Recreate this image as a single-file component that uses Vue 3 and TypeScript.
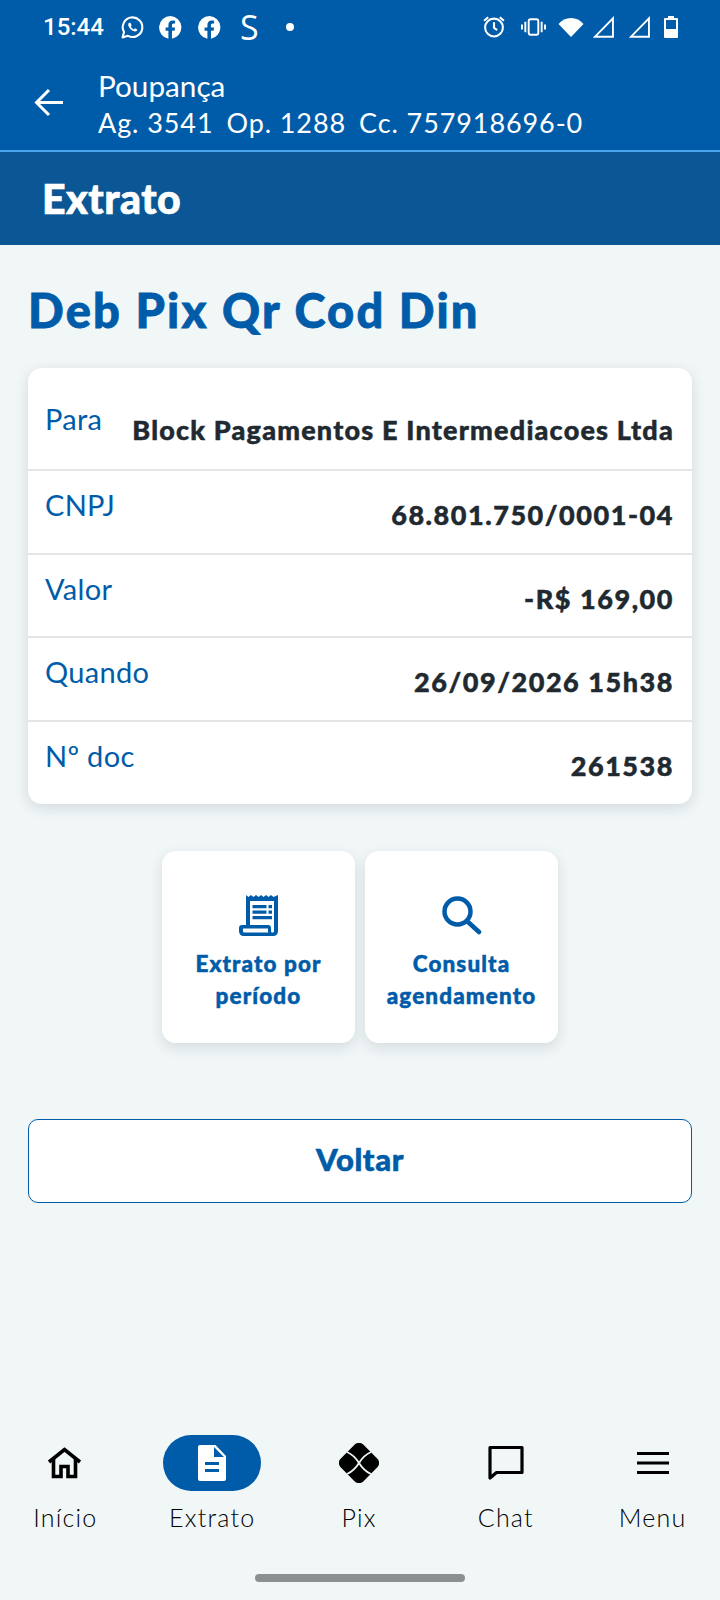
<script setup lang="ts">
const rows = [
  { label: "Para", value: "Block Pagamentos E Intermediacoes Ltda", num: false },
  { label: "CNPJ", value: "68.801.750/0001-04", num: true },
  { label: "Valor", value: "-R$ 169,00", num: true },
  { label: "Quando", value: "26/09/2026 15h38", num: true },
  { label: "Nº doc", value: "261538", num: true },
];
</script>

<template>
  <div class="page">
    <header class="top">
      <div class="status">
        <div class="status-left">
          <span class="clock">15:44</span>
          <svg class="wa" viewBox="0 0 24 24" width="25" height="25" fill="none" stroke="#fff" stroke-width="2">
            <path d="M2.500 21.500l1.400-5.100A9.400 9.400 0 1 1 7.600 20z" stroke-linejoin="round" />
            <path d="M8.600 7.400c-1 1-1 2.600.3 4.600 1.400 2 3.400 3.600 5.400 3.800 1.300.1 2.200-.8 2.300-1.900l-2.200-1.100-1 1.100c-1.200-.5-2.400-1.600-3-2.800l.8-1-1-2.500z" fill="#fff" stroke="none" />
          </svg>
          <svg class="fb" viewBox="1 1 22 22" width="23" height="23"><path fill="#fff" d="M12 1a11 11 0 0 0-2 21.800v-7.700H7.300V12H10V9.600c0-2.700 1.600-4.200 4-4.200 1.200 0 2.400.2 2.400.2v2.600h-1.300c-1.300 0-1.700.8-1.700 1.600V12h3l-.5 3.100h-2.500v7.700A11 11 0 0 0 12 1z" /></svg>
          <svg class="fb" viewBox="1 1 22 22" width="23" height="23"><path fill="#fff" d="M12 1a11 11 0 0 0-2 21.800v-7.700H7.300V12H10V9.600c0-2.700 1.600-4.200 4-4.200 1.200 0 2.400.2 2.400.2v2.600h-1.300c-1.300 0-1.700.8-1.700 1.600V12h3l-.5 3.100h-2.500v7.700A11 11 0 0 0 12 1z" /></svg>
          <span class="s-mark">S</span>
          <span class="dot"></span>
        </div>
        <div class="status-right">
          <svg class="i-alarm" viewBox="1.500 2 21 21" width="22" height="22" fill="none" stroke="#fff" stroke-width="2"><circle cx="12" cy="13" r="8.500" /><path d="M12 8v5.200l3 2.300M2.500 6.500l4-3.300M21.500 6.500l-4-3.300" /></svg>
          <svg class="i-vib" viewBox="0 3 26 18" width="25" height="18" fill="none" stroke="#fff" stroke-width="2"><rect x="8" y="4" width="10" height="16" rx="2" /><path d="M4.500 6.500v11M21.500 6.500v11M1 9.500v5M25 9.500v5" /></svg>
          <svg class="i-wifi" viewBox="0 2 26 20" width="26" height="21"><path fill="#fff" d="M13 21.500L.5 8.500C3.700 4.800 8 2.500 13 2.500s9.300 2.300 12.500 6z" /></svg>
          <svg class="i-sig1" viewBox="1.500 1.500 20 20.500" width="21" height="22"><path fill="none" stroke="#fff" stroke-width="1.800" d="M20.500 3.500v17.500H3.500z" /></svg>
          <svg class="i-sig2" viewBox="1.500 1.500 20 20.500" width="21" height="22"><path fill="none" stroke="#fff" stroke-width="1.800" d="M20.500 3.500v17.500H3.500z" /></svg>
          <svg class="i-batt" viewBox="0 1 14 23" width="14" height="23"><path fill="#fff" fill-rule="evenodd" d="M4 1h6v2h3a1 1 0 0 1 1 1v18a1 1 0 0 1-1 1H1a1 1 0 0 1-1-1V4a1 1 0 0 1 1-1h3zM2 5v9h10V5z" /></svg>
        </div>
      </div>
      <div class="appbar">
        <svg class="back" viewBox="0 0 30 30" width="30" height="30" fill="none" stroke="#fff" stroke-width="3"><path d="M29 15.500H3M15 3L2.500 15.500 15 28" /></svg>
        <div class="account">
          <div class="acc-name">Poupança</div>
          <div class="acc-num">
            <span>Ag. 3541</span>
            <span>Op. 1288</span>
            <span>Cc. 757918696-0</span>
          </div>
        </div>
      </div>
    </header>
    <div class="band">Extrato</div>

    <main class="content">
      <h1 class="title">Deb Pix Qr Cod Din</h1>
      <section class="card">
        <div v-for="r in rows" :key="r.label" class="row">
          <span class="label">{{ r.label }}</span>
          <span class="value" :class="{ num: r.num }">{{ r.value }}</span>
        </div>
      </section>

      <div class="actions">
        <button class="action">
          <svg viewBox="0 0 40 42" width="40" height="42">
            <path fill="#005ca9" fill-rule="evenodd" d="M7 0l2.500 2L12 0l2.500 2L17 0l2.500 2L22 0l2.500 2L27 0l2.500 2L32 0l2.500 2L39 0v36c0 3-2 5-5 5H5c-3 0-5-2-5-5v-3c0-2 1-3 3-3h4zM11 6v24h18c2 0 3 1 3 3v3c0 1 .5 1.500 1.500 1.500S35 37 35 36V6zM4 33.500V36c0 1 .5 1.500 1.500 1.500h23.800c-.3-.5-.3-1-.3-1.500v-2.500z" />
            <path fill="#005ca9" d="M13.500 10h14v3.200h-14zM29.500 10h3.500v3.200h-3.500zM13.500 15.500h14v3.200h-14zM29.500 15.500h3.500v3.200h-3.500zM13.500 21h19.500v3.200H13.500z" />
          </svg>
          <span>Extrato por<br />período</span>
        </button>
        <button class="action">
          <svg viewBox="0 0 40 42" width="40" height="42" fill="none" stroke="#005ca9" stroke-width="4.500">
            <circle cx="15.500" cy="16.500" r="13" />
            <path d="M25 26l12 11" stroke-linecap="round" />
          </svg>
          <span>Consulta<br />agendamento</span>
        </button>
      </div>

      <button class="voltar">Voltar</button>
    </main>

    <nav class="nav">
      <div class="nav-item">
        <div class="nav-icon">
          <svg viewBox="0 0 36 32" width="36" height="32" fill="none" stroke="#000" stroke-width="3.600"><path d="M2 15L17.500 2.500 33 15" /><path d="M6.500 12v17.500h7.500v-10h7v10h7.500V12" /></svg>
        </div>
        <span>Início</span>
      </div>
      <div class="nav-item">
        <div class="nav-icon pill">
          <svg viewBox="0 0 28 36" width="28" height="36"><path fill="#fff" fill-rule="evenodd" d="M2 0h15.500L28 11v23a2 2 0 0 1-2 2H2a2 2 0 0 1-2-2V2a2 2 0 0 1 2-2zM16 2v10h10zM7 17v3h14v-3zM7 24v3h14v-3z" /></svg>
        </div>
        <span>Extrato</span>
      </div>
      <div class="nav-item">
        <div class="nav-icon">
          <svg viewBox="0 0 40 40" width="40" height="40">
            <rect x="4" y="4" width="32" height="32" rx="6" transform="rotate(45 20 20)" />
            <path d="M8 9Q15 12 20 20Q25 28 32 31M32 9Q25 12 20 20Q15 28 8 31" fill="none" stroke="#f1f6f7" stroke-width="1.800" />
          </svg>
        </div>
        <span>Pix</span>
      </div>
      <div class="nav-item">
        <div class="nav-icon">
          <svg viewBox="0 0 36 36" width="36" height="36" fill="none" stroke="#000" stroke-width="3.200"><path d="M2 2.500h32v25H8.500L2 33z" stroke-linejoin="round" /></svg>
        </div>
        <span>Chat</span>
      </div>
      <div class="nav-item">
        <div class="nav-icon">
          <svg viewBox="0 0 32 22" width="32" height="22" fill="#000"><path d="M0 0h32v3H0zM0 9.500h32v3H0zM0 19h32v3H0z" /></svg>
        </div>
        <span>Menu</span>
      </div>
    </nav>
    <div class="gesture-wrap"><div class="gesture"></div></div>
  </div>
</template>

<style scoped>
.page {
  width: 720px;
  height: 1600px;
  display: flex;
  flex-direction: column;
  background: #f1f6f7;
  font-family: Lato, "Liberation Sans", sans-serif;
  overflow: hidden;
}

.top {
  background: #005ca9;
  height: 150px;
  color: #fff;
}

.status {
  height: 54px;
  display: flex;
  justify-content: space-between;
  align-items: center;
  padding: 0 42px 0 43px;
}

.status-left {
  display: flex;
  align-items: center;
}

.clock {
  font-family: Roboto, sans-serif;
  font-size: 24px;
  font-weight: 500;
  margin-right: 16px;
}

.wa {
  margin-right: 14px;
}

.fb {
  margin-right: 16px;
}

.s-mark {
  font-family: "Open Sans", sans-serif;
  font-size: 34px;
  line-height: 34px;
  margin-left: 3px;
}

.dot {
  width: 8px;
  height: 8px;
  border-radius: 50%;
  background: #fff;
  margin-left: 27px;
}

.status-right {
  display: flex;
  align-items: center;
}

.i-vib {
  margin-left: 16px;
}

.i-wifi {
  margin-left: 12px;
}

.i-sig1 {
  margin-left: 9px;
}

.i-sig2 {
  margin-left: 15px;
}

.i-batt {
  margin-left: 14px;
}

.appbar {
  height: 96px;
  display: flex;
  align-items: center;
  padding-left: 34px;
}

.back {
  margin-right: 34px;
}

.account {
  padding-top: 4px;
}

.acc-name {
  font-size: 29.700px;
  line-height: 36px;
}

.acc-num {
  margin-top: 2px;
  display: flex;
  gap: 13px;
  font-size: 27px;
  line-height: 34px;
  letter-spacing: 0.9px;
}

.band {
  border-top: 2px solid #4aa5ec;
  background: #0b5694;
  height: 93px;
  box-sizing: content-box;
  display: flex;
  align-items: center;
  padding: 0 0 0 42px;
  color: #fff;
  font-size: 41px;
  font-weight: 900;
  letter-spacing: 0.5px;
  -webkit-text-stroke: 0.7px #fff;
}

.content {
  flex: 1;
  padding: 0 28px;
  display: flex;
  flex-direction: column;
}

.title {
  margin: 36px 0 0;
  color: #005ca9;
  font-size: 47px;
  line-height: 58px;
  font-weight: 900;
  letter-spacing: 2.200px;
  -webkit-text-stroke: 0.8px #005ca9;
}

.card {
  margin-top: 29px;
  background: #fff;
  border-radius: 14px;
  box-shadow: 0 4px 14px rgba(30, 60, 80, 0.14);
}

.row {
  height: 83.670px;
  display: flex;
  justify-content: space-between;
  border-top: 2px solid #e3e5e6;
  padding: 0 18px 0 17px;
  box-sizing: border-box;
}

.row:first-child {
  height: 101px;
  border-top: none;
}

.label {
  color: #005ca9;
  font-size: 29px;
  line-height: 34px;
  letter-spacing: 0.3px;
  padding-top: 17px;
}

.row:first-child .label {
  padding-top: 34px;
}

.value {
  color: #212930;
  font-size: 27px;
  line-height: 34px;
  font-weight: 900;
  letter-spacing: 1.200px;
  padding-top: 27px;
  white-space: nowrap;
  -webkit-text-stroke: 0.5px #212930;
}

.value.num {
  letter-spacing: 1.550px;
}

.row:first-child .value {
  padding-top: 45px;
}

.actions {
  margin-top: 47px;
  display: flex;
  justify-content: center;
  gap: 10px;
}

.action {
  width: 193px;
  height: 192px;
  border: none;
  border-radius: 14px;
  background: #fff;
  box-shadow: 0 5px 14px rgba(30, 60, 80, 0.13);
  display: flex;
  flex-direction: column;
  align-items: center;
  padding: 44px 0 0;
  color: #005ca9;
  font-family: inherit;
  font-size: 22.500px;
  line-height: 32px;
  font-weight: 900;
  letter-spacing: 1.100px;
  -webkit-text-stroke: 0.5px #005ca9;
}

.action span {
  margin-top: 11px;
}

.voltar {
  margin-top: 76px;
  height: 84px;
  border: 1px solid #005ca9;
  border-radius: 10px;
  background: #fff;
  color: #005ca9;
  font-family: inherit;
  font-size: 31px;
  font-weight: 900;
  letter-spacing: 0.6px;
  padding-bottom: 4px;
  -webkit-text-stroke: 0.6px #005ca9;
}

.nav {
  display: grid;
  grid-template-columns: repeat(5, 1fr);
  margin: 0 0 0 -1px;
  width: 734px;
  transform: translateX(-7px);
}

.nav-item {
  display: flex;
  flex-direction: column;
  align-items: center;
  font-size: 25px;
  font-weight: 300;
  line-height: 32px;
  letter-spacing: 1.200px;
  color: #000;
}

.nav-icon {
  width: 98px;
  height: 56px;
  display: flex;
  align-items: center;
  justify-content: center;
  margin-bottom: 10px;
}

.pill {
  background: #005ca9;
  border-radius: 28px;
}

.gesture-wrap {
  height: 67px;
  display: flex;
  justify-content: center;
  padding-top: 41px;
  box-sizing: border-box;
}

.gesture {
  width: 210px;
  height: 8px;
  border-radius: 4px;
  background: #8c9091;
}
</style>
